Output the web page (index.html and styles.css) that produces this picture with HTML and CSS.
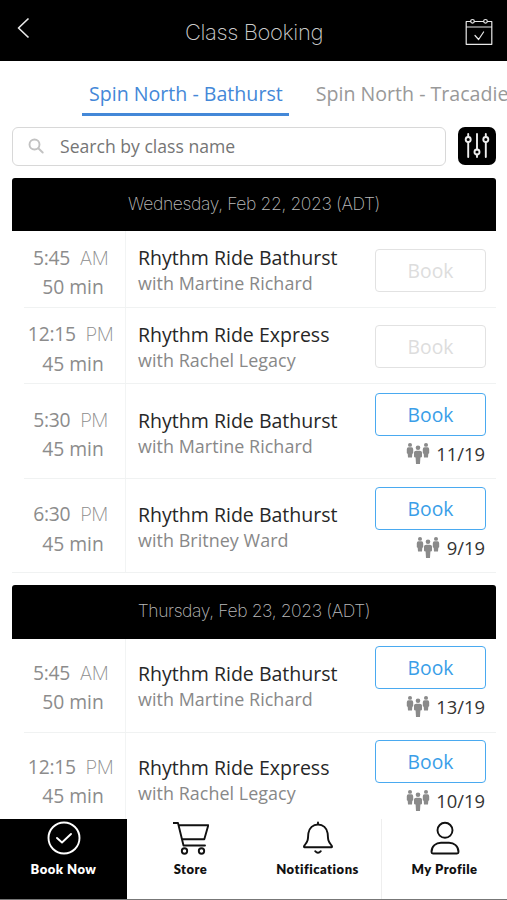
FILE: index.html
```html
<!DOCTYPE html>
<html lang="en">
<head>
<meta charset="utf-8">
<title>Class Booking</title>
<link rel="stylesheet" href="styles.css">
</head>
<body>
<svg class="defs" width="0" height="0" aria-hidden="true">
  <symbol id="people" viewBox="0 0 24 22" preserveAspectRatio="none">
    <g id="person">
      <circle cx="4" cy="2" r="2"/>
      <path d="M2.500 4.500h3q1.700 0 1.700 2v4q0 .8-.9.800l-.3 4H2l-.3-4q-.9 0-.9-.8v-4q0-2 1.700-2z"/>
    </g>
    <use href="#person" x="16"/>
    <circle cx="12" cy="5" r="2.300"/>
    <path d="M10.300 8h3.400q2.300 0 2.300 2v4.200q0 1-1.600 1l-.4 6.800h-4l-.4-6.800Q8 15.200 8 14.200V10q0-2 2.300-2z"/>
  </symbol>
</svg>
<div class="app">
  <header class="topbar">
    <svg class="back" width="14" height="22" viewBox="0 0 14 22"><path d="M11.500 1.500 1.500 11l10 9.500"/></svg>
    <h1>Class Booking</h1>
    <svg class="calendar" width="28" height="28" viewBox="0 0 28 28"><path d="M5.500 3.500H1.200v22.800h25.600V3.500h-4.300M9.500 3.500h9M1.200 9h25.600M10 17.500l3.600 4 5-7.500"/><circle cx="7.500" cy="3.300" r="1.800"/><circle cx="20.500" cy="3.300" r="1.800"/></svg>
  </header>
  <nav class="tabs">
    <a class="tab active">Spin North - Bathurst</a>
    <a class="tab">Spin North - Tracadie</a>
  </nav>
  <div class="search-row">
    <div class="search">
      <svg width="16" height="16" viewBox="0 0 16 16"><circle cx="6.500" cy="6.500" r="5"/><path d="m10.300 10.300 4.400 4.200"/></svg>
      <span>Search by class name</span>
    </div>
    <div class="filter">
      <svg width="26" height="26" viewBox="0 0 26 26"><path d="M4.200 1v3M4.200 9v15M13 1v15.500M13 21.500V24M21.800 1v3M21.800 9v15"/><circle cx="4.200" cy="6.500" r="2.500"/><circle cx="13" cy="19" r="2.500"/><circle cx="21.800" cy="6.500" r="2.500"/></svg>
    </div>
  </div>
  <main class="schedule">
    <section class="day">
      <h2>Wednesday, Feb 22, 2023 (ADT)</h2>
      <article class="class-row closed">
        <div class="time"><div class="start">5:45 <span>AM</span></div><div class="length">50 min</div></div>
        <div class="info"><h3>Rhythm Ride Bathurst</h3><p>with Martine Richard</p></div>
        <div class="action"><div class="book">Book</div></div>
      </article>
      <article class="class-row closed">
        <div class="time"><div class="start">12:15 <span>PM</span></div><div class="length">45 min</div></div>
        <div class="info"><h3>Rhythm Ride Express</h3><p>with Rachel Legacy</p></div>
        <div class="action"><div class="book">Book</div></div>
      </article>
      <article class="class-row">
        <div class="time"><div class="start">5:30 <span>PM</span></div><div class="length">45 min</div></div>
        <div class="info"><h3>Rhythm Ride Bathurst</h3><p>with Martine Richard</p></div>
        <div class="action"><div class="book">Book</div><div class="count"><svg><use href="#people"/></svg>11/19</div></div>
      </article>
      <article class="class-row">
        <div class="time"><div class="start">6:30 <span>PM</span></div><div class="length">45 min</div></div>
        <div class="info"><h3>Rhythm Ride Bathurst</h3><p>with Britney Ward</p></div>
        <div class="action"><div class="book">Book</div><div class="count"><svg><use href="#people"/></svg>9/19</div></div>
      </article>
    </section>
    <section class="day">
      <h2>Thursday, Feb 23, 2023 (ADT)</h2>
      <article class="class-row">
        <div class="time"><div class="start">5:45 <span>AM</span></div><div class="length">50 min</div></div>
        <div class="info"><h3>Rhythm Ride Bathurst</h3><p>with Martine Richard</p></div>
        <div class="action"><div class="book">Book</div><div class="count"><svg><use href="#people"/></svg>13/19</div></div>
      </article>
      <article class="class-row">
        <div class="time"><div class="start">12:15 <span>PM</span></div><div class="length">45 min</div></div>
        <div class="info"><h3>Rhythm Ride Express</h3><p>with Rachel Legacy</p></div>
        <div class="action"><div class="book">Book</div><div class="count"><svg><use href="#people"/></svg>10/19</div></div>
      </article>
    </section>
  </main>
  <nav class="bottom-nav">
    <a class="current">
      <svg viewBox="0 0 36 36"><circle cx="18" cy="18" r="15.500"/><path d="m11 18 5 4.500 9-8.500"/></svg>
      <span>Book Now</span>
    </a>
    <a>
      <svg viewBox="0 0 36 36"><path d="M0 3h5l5.500 22.500H32M6 5.200h29.300l-4 14H9.200"/><circle cx="11.500" cy="31" r="2.700"/><circle cx="28.500" cy="31" r="2.700"/></svg>
      <span>Store</span>
    </a>
    <a>
      <svg viewBox="0 0 36 36"><path d="M18 2.500v2M4.500 27.200h27q.8 0 .4-1c-.5-1.300-2.600-3-3.500-6-.6-2-.4-4-.8-7C26.900 8 23 4.500 18 4.500S9.100 8 8.400 13.200c-.4 3-.2 5-.8 7-.9 3-3 4.700-3.500 6q-.4 1 .4 1zM15.200 31.200q2.800 3.200 5.600 0"/></svg>
      <span>Notifications</span>
    </a>
    <a class="profile">
      <svg viewBox="0 0 36 36"><circle cx="18" cy="10.300" r="7.500"/><path d="M6 33.500h24q1.500 0 1.500-1.500c0-6-4.500-9.300-9.500-9.300h-8c-5 0-9.500 3.300-9.500 9.300q0 1.500 1.500 1.500z"/></svg>
      <span>My Profile</span>
    </a>
  </nav>
</div>
</body>
</html>
```
FILE: styles.css
```css
* { box-sizing: border-box; }
body { margin: 0; background: #fff; font-family: "Open Sans", "Noto Sans", sans-serif; }
h1, h2, h3, p { margin: 0; font-weight: 400; }
svg { display: block; flex: none; fill: none; stroke: currentColor; stroke-linecap: round; stroke-linejoin: round; }
.defs { position: absolute; }
.app { height: 900px; display: flex; flex-direction: column; overflow: hidden; border-bottom: 1px solid #777; }

.topbar { flex: none; height: 61px; padding: 0 14px 0 17px; background: #000; color: #e8e8e8; display: grid; grid-template-columns: 14px 1fr 28px; }
.topbar h1 { padding-left: 12px; text-align: center; font: 200 22px/64px Inter, sans-serif; letter-spacing: -0.38px; color: #ccc; }
.back { margin-top: 17px; stroke-width: 1.7; stroke-linecap: butt; }
.calendar { margin-top: 18px; stroke-width: 1.2; }

.tabs { flex: none; height: 55px; padding-left: 82px; display: flex; gap: 20px; overflow: hidden; }
.tab { flex: none; height: 55px; padding: 0 7px; font-size: 19.600px; line-height: 66px; white-space: nowrap; color: #999; }
.tab.active { padding-right: 6px; color: #4488d8; border-bottom: 3px solid #4488d8; }

.search-row { flex: none; height: 50px; padding: 11px 11px 0 12px; display: flex; justify-content: space-between; }
.search { width: 434px; height: 39px; padding: 0 0 2px 15px; border: 1px solid #d8d8d8; border-radius: 6px; display: flex; align-items: center; gap: 16px; font-size: 17.600px; color: #757575; }
.search svg { color: #c2c2c2; stroke-width: 1.900; }
.filter { width: 38px; height: 38px; border-radius: 7px; background: #000; color: #eee; display: grid; place-items: center; }
.filter svg { stroke-width: 1.900; }

.schedule { flex: 1; min-height: 0; overflow: hidden; padding: 12px 11px 0 12px; }
.day { margin-bottom: 11.500px; }
.day h2 { height: 53px; background: #000; color: #bbb; border-radius: 3px 3px 0 0; text-align: center; font: 200 17.500px/52px Inter, sans-serif; letter-spacing: -0.38px; }
.class-row { height: 94.600px; display: grid; grid-template-columns: 102px 1fr 111px; padding-right: 10px; margin-left: 12px; border-bottom: 1px solid #f0f2f2; }
.class-row:last-child { margin-left: 0; padding-left: 12px; }
.class-row.closed { height: 76.600px; }
.time { border-right: 1px solid #f2f4f4; display: flex; flex-direction: column; justify-content: center; align-items: center; font-size: 19.300px; line-height: 29.500px; color: #8c8c8c; padding-top: 6.500px; margin-left: -8px; }
.start { letter-spacing: -0.25px; white-space: nowrap; }
.start span { margin-left: 5px; font: 200 19px Inter, sans-serif; letter-spacing: -0.6px; }
.length { margin-left: 5px; }
.info { padding: 4.500px 0 0 12px; display: flex; flex-direction: column; justify-content: center; white-space: nowrap; }
.closed .info { padding-top: 4px; }
.info h3 { font-size: 19.550px; line-height: 26px; color: #272727; }
.info p { font-size: 17.900px; line-height: 25px; letter-spacing: 0.06px; color: #888; }
.action { padding-top: 8.500px; }
.closed .action { padding-top: 17.500px; }
.day + .day h2 { height: 54px; }
.day + .day .class-row { height: 94px; }
.day + .day .time { padding-top: 4px; }
.day + .day .info { padding-top: 3px; }
.day + .day .action { padding-top: 7.500px; }
.book { height: 43px; border: 1px solid #4aaaf0; border-radius: 4px; text-align: center; font-size: 19.300px; line-height: 42px; color: #3a9ee8; }
.closed .book { border-color: #e2e2e2; color: #ddd; }
.count { margin-top: 5px; padding-right: 1px; display: flex; justify-content: flex-end; gap: 6.500px; font-size: 18.400px; line-height: 25px; color: #333; }
.count svg { width: 24px; height: 21px; margin-top: 2px; fill: #8a8a8a; stroke: none; }

.bottom-nav { flex: none; height: 80px; display: grid; grid-template-columns: 127px 127px 127px 126px; background: #fff; color: #111; }
.bottom-nav a { display: flex; flex-direction: column; align-items: center; padding-top: 1px; font: 800 13px/16px Lato, sans-serif; letter-spacing: 0.5px; }
.bottom-nav svg { width: 36px; height: 36px; stroke-width: 1.900; margin-bottom: 5px; }
.bottom-nav .current { background: #000; color: #fff; }
.bottom-nav .profile { border-left: 1px solid #eee; }
```
